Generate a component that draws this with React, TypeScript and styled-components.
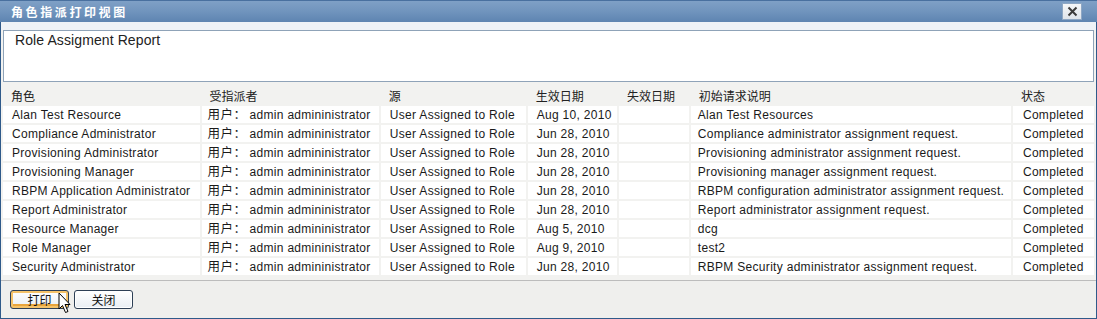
import React from "react";
import styled, { createGlobalStyle } from "styled-components";

const GlobalStyle = createGlobalStyle`
  html, body {
    margin: 0;
    padding: 0;
    background: #ffffff;
  }
  * {
    box-sizing: border-box;
  }
`;

const FONT = `"Liberation Sans", Arial, "Noto Sans CJK SC", sans-serif`;
const CJK = `"Noto Sans CJK SC", sans-serif`;

const Window = styled.div`
  position: relative;
  width: 1097px;
  height: 319px;
  border: 1px solid #2f5a8a;
  border-top: none;
  background: #f2f2f0;
  font-family: ${FONT};
  color: #111;
  display: flex;
  flex-direction: column;
`;

const TitleBar = styled.div`
  height: 22px;
  margin: 0 -1px;
  flex: none;
  display: flex;
  align-items: center;
  justify-content: space-between;
  padding: 0 15px 0 11px;
  background: linear-gradient(to bottom, #7fa0c6 0%, #7094bd 50%, #5e84b1 100%);
  border-top: 1px solid #49709f;
`;

const Title = styled.span`
  color: #ffffff;
  font-weight: bold;
  font-size: 12px;
  letter-spacing: 2.6px;
  font-family: ${CJK};
`;

const CloseButton = styled.button`
  width: 20px;
  height: 17px;
  padding: 0;
  border: 1px solid #8ea7c4;
  background: linear-gradient(#f4f6f8, #dfe4ea);
  display: flex;
  align-items: center;
  justify-content: center;
`;

const Strip = styled.div`
  height: 8px;
  flex: none;
  background: #eef2f7;
`;

const ReportBox = styled.div`
  height: 52px;
  flex: none;
  margin: 0 2px 0 2px;
  background: #ffffff;
  border: 1px solid #8fa3b8;
  padding: 1px 11px;
  font-size: 14px;
  letter-spacing: 0.1px;
  color: #222;
`;

const Table = styled.table`
  margin: 3px 0 0 0;
  border-collapse: separate;
  border-spacing: 2px;
  width: 1095px;
  table-layout: fixed;
  font-size: 12px;
  letter-spacing: 0.3px;
`;

const Th = styled.th<{ $w: number }>`
  width: ${({ $w }) => $w}px;
  text-align: left;
  font-weight: normal;
  height: 17px;
  line-height: 17px;
  padding: 0 8px;
  font-family: ${CJK};
  font-size: 12px;
  letter-spacing: 0;
  color: #222;
`;

const Td = styled.td<{ $pad?: number }>`
  background: #ffffff;
  height: 17px;
  line-height: 15px;
  padding: 2px 0 0 ${({ $pad }) => $pad ?? 8}px;
  white-space: nowrap;
  color: #1a1a1a;
`;

const UserLabel = styled.span`
  line-height: 1;
  font-size: 12.5px;
  font-family: ${CJK};
  letter-spacing: 0.5px;
  margin-right: 3px;
`;

const Footer = styled.div`
  margin-top: 3px;
  flex: 1;
  border-top: 1px solid #bcbcbc;
  background: #efefed;
  display: flex;
  align-items: flex-start;
  gap: 5px;
  padding: 9px 0 0 9px;
`;

const Button = styled.button<{ $focused?: boolean }>`
  width: 59px;
  height: 19px;
  padding: 0;
  border-radius: 3px;
  border: 1px solid #2d3f55;
  background: linear-gradient(#ffffff, #e9eef3);
  box-shadow: ${({ $focused }) =>
    $focused ? "inset 0 0 0 2px #f5c36a, inset 0 -2px 0 2px #e9a53c" : "inset 0 0 0 1px #ffffff"};
  font-family: ${CJK};
  font-size: 12px;
  color: #111;
  line-height: 16px;
`;

const Cursor = styled.svg`
  position: absolute;
  left: 57px;
  top: 292px;
`;

const columns = [
  { title: "角色", w: 194 },
  { title: "受指派者", w: 175 },
  { title: "源", w: 143 },
  { title: "生效日期", w: 88 },
  { title: "失效日期", w: 69 },
  { title: "初始请求说明", w: 316 },
  { title: "状态", w: 80 },
];

const rows = [
  ["Alan Test Resource", "Aug 10, 2010", "Alan Test Resources"],
  ["Compliance Administrator", "Jun 28, 2010", "Compliance administrator assignment request."],
  ["Provisioning Administrator", "Jun 28, 2010", "Provisioning administrator assignment request."],
  ["Provisioning Manager", "Jun 28, 2010", "Provisioning manager assignment request."],
  ["RBPM Application Administrator", "Jun 28, 2010", "RBPM configuration administrator assignment request."],
  ["Report Administrator", "Jun 28, 2010", "Report administrator assignment request."],
  ["Resource Manager", "Aug 5, 2010", "dcg"],
  ["Role Manager", "Aug 9, 2010", "test2"],
  ["Security Administrator", "Jun 28, 2010", "RBPM Security administrator assignment request."],
];

export default function App() {
  return (
    <>
      <GlobalStyle />
      <Window>
        <TitleBar>
          <Title>角色指派打印视图</Title>
          <CloseButton aria-label="关闭">
            <svg width="11" height="11" viewBox="0 0 11 11">
              <path d="M1.5 1.5 L9.5 9.5 M9.5 1.5 L1.5 9.5" stroke="#3b3b3b" strokeWidth="2" />
            </svg>
          </CloseButton>
        </TitleBar>
        <Strip />
        <ReportBox>Role Assigment Report</ReportBox>
        <Table>
          <thead>
            <tr>
              {columns.map((c) => (
                <Th key={c.title} $w={c.w}>
                  {c.title}
                </Th>
              ))}
            </tr>
          </thead>
          <tbody>
            {rows.map(([role, date, desc]) => (
              <tr key={role}>
                <Td $pad={9}>{role}</Td>
                <Td $pad={6}>
                  <UserLabel>用户：</UserLabel>admin admininistrator
                </Td>
                <Td $pad={9}>User Assigned to Role</Td>
                <Td $pad={9}>{date}</Td>
                <Td />
                <Td $pad={7}>{desc}</Td>
                <Td $pad={10}>Completed</Td>
              </tr>
            ))}
          </tbody>
        </Table>
        <Footer>
          <Button $focused>打印</Button>
          <Button>关闭</Button>
        </Footer>
        <Cursor width="14" height="23" viewBox="0 0 14 23">
          <path
            d="M1 1 L1 17 L4.5 13.5 L7.5 20.5 L10 19.5 L7 12.5 L12 12.5 Z"
            fill="#ffffff"
            stroke="#000000"
            strokeWidth="1"
            strokeLinejoin="miter"
          />
        </Cursor>
      </Window>
    </>
  );
}
